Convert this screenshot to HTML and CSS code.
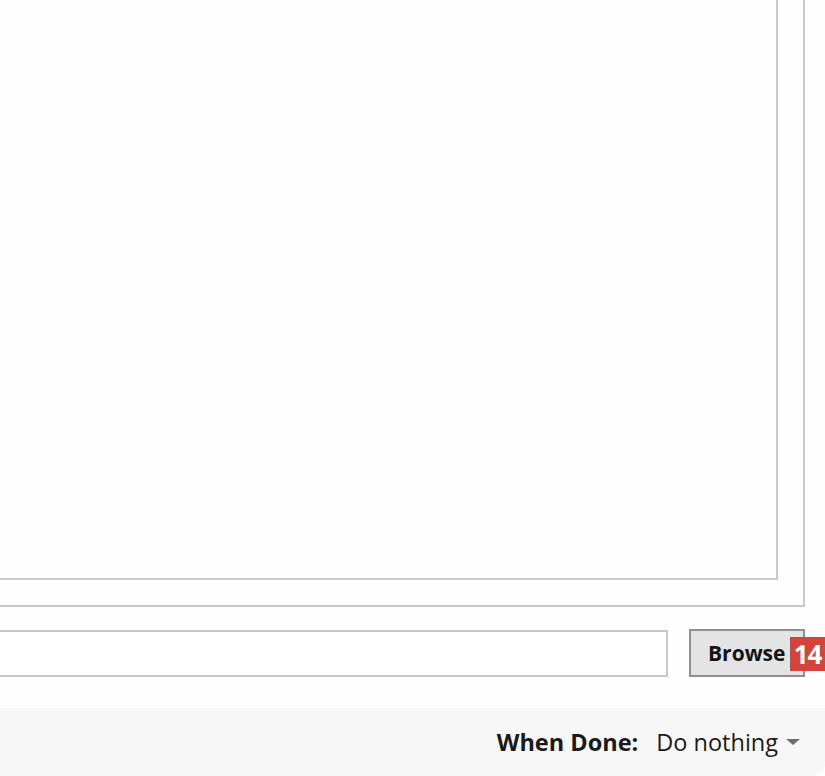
FILE: index.html
```html
<!DOCTYPE html>
<html lang="en">
<head>
    <meta charset="UTF-8">
    <meta name="viewport" content="width=device-width, initial-scale=1.0">
    <title>Convert</title>
    <link rel="stylesheet" href="styles.css">
</head>
<body>
    <div id="window">
        <div id="main">
            <div class="outer-box">
                <div class="inner-box"></div>
            </div>

            <div class="dest-row">
                <input type="text" class="dest-input">
                <button class="browse-btn">Browse<span class="badge">14</span></button>
            </div>
        </div>

        <div id="footer">
            <span class="when-label">When Done:</span>
            <span class="when-select">Do nothing<span class="caret"></span></span>
        </div>
    </div>
</body>
</html>
```

FILE: styles.css
```css
/* General reset */
* {
    box-sizing: border-box;
    margin: 0;
    padding: 0;
}

html, body {
    height: 100%;
    overflow: hidden;
}

body {
    font-family: 'Open Sans', 'Noto Sans', sans-serif;
    background-color: #ffffff;
    color: #1a1a1a;
}

#window {
    display: flex;
    flex-direction: column;
    height: 776px;
    background-color: #fefefe;
    border-bottom-right-radius: 12px;
    overflow: hidden;
}

/* Main area */
#main {
    flex: 1;
    display: flex;
    flex-direction: column;
    padding-right: 20px;
}

.outer-box {
    display: flex;
    height: 627px;
    margin: -20px 0 0 -20px;
    padding: 0 25px 25px 0;
    border: 2px solid #c9c9c9;
}

.inner-box {
    flex: 1;
    background-color: #fefefe;
    border: 2px solid #c9c9c9;
}

.dest-row {
    display: flex;
    align-items: center;
    gap: 21px;
    margin-top: 22px;
    margin-left: -20px;
}

.dest-input {
    flex: 1;
    height: 47px;
    border: 2px solid #c6c6c6;
    background-color: #ffffff;
    outline: none;
}

.browse-btn {
    position: relative;
    width: 116px;
    height: 48px;
    padding-left: 17px;
    text-align: left;
    border: 2px solid #8f8f8f;
    background-color: #e4e4e4;
    font-family: 'Open Sans', 'Noto Sans', sans-serif;
    font-size: 21px;
    font-weight: 700;
    color: #141414;
}

.badge {
    position: absolute;
    top: 6px;
    right: -22px;
    width: 35px;
    height: 34px;
    background-color: #d4443a;
    color: #ffffff;
    font-size: 26px;
    font-weight: 700;
    line-height: 34px;
    letter-spacing: -1px;
    text-align: center;
}

/* Footer */
#footer {
    height: 68px;
    display: flex;
    align-items: center;
    justify-content: flex-end;
    padding-right: 25px;
    background-color: #f7f7f7;
    font-size: 23.5px;
}

.when-label {
    font-weight: 700;
    margin-right: 18px;
}

.when-select {
    display: flex;
    align-items: center;
}

.caret {
    width: 0;
    height: 0;
    margin-left: 8px;
    border-left: 7px solid transparent;
    border-right: 7px solid transparent;
    border-top: 6px solid #6e6e6e;
}
```
